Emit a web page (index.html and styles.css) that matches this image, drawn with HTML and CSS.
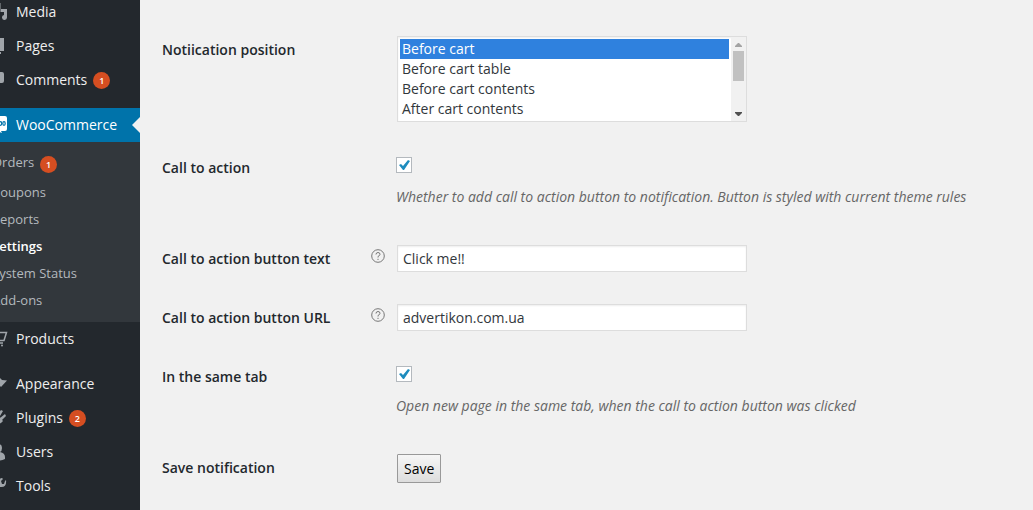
FILE: index.html
```html
<!DOCTYPE html>
<html lang="en">
<head>
<meta charset="utf-8">
<title>WooCommerce settings</title>
<link rel="stylesheet" href="styles.css">
</head>
<body>
<div class="admin">
  <nav class="sidebar" aria-label="Admin menu">
    <ul class="menu">
      <li><a class="menu-link" href="#"><svg class="icon" viewBox="0 0 20 20"><path d="M2 1h10.500v9H2zM13 7h6v8.500a2.500 2.500 0 1 1-3-2.500V10h-3z"/></svg>Media</a></li>
      <li><a class="menu-link" href="#"><svg class="icon" viewBox="0 0 20 20"><path d="M6 15V2h10v13zM5 16h8v2H3V5h2z"/></svg>Pages</a></li>
      <li><a class="menu-link" href="#"><svg class="icon" viewBox="0 0 20 20"><path d="M5 2h9q2 0 2 2v7q0 2-2 2h-2l-5 5v-5H5q-2 0-2-2V4q0-2 2-2z"/></svg>Comments <span class="count">1</span></a></li>
      <li class="separator"></li>
      <li>
        <a class="menu-link current" href="#"><svg class="icon" viewBox="0 0 20 20"><path d="M2 1h15q2 0 2 2v11q0 2-2 2h-4l1 2-5-2H2z"/><g class="icon-mark"><ellipse cx="12.500" cy="8.500" rx="1.200" ry="1.800"/><ellipse cx="16" cy="8.500" rx="1.200" ry="1.800"/><path d="M3 6l1 5 2-3 1 3 2-5"/></g></svg>WooCommerce</a>
        <ul class="submenu">
          <li><a class="submenu-link with-count" href="#">Orders <span class="count">1</span></a></li>
          <li><a class="submenu-link" href="#">Coupons</a></li>
          <li><a class="submenu-link" href="#">Reports</a></li>
          <li><a class="submenu-link selected" href="#">Settings</a></li>
          <li><a class="submenu-link" href="#">System Status</a></li>
          <li><a class="submenu-link" href="#">Add-ons</a></li>
        </ul>
      </li>
      <li><a class="menu-link" href="#"><svg class="icon" viewBox="0 0 20 20"><path class="icon-line" d="M5 3.500h13.500L16 11.500H7M9 14h6"/><circle cx="10" cy="16.500" r="1"/><circle cx="14" cy="16.500" r="1"/></svg>Products</a></li>
      <li class="separator"></li>
      <li><a class="menu-link" href="#"><svg class="icon" viewBox="0 0 20 20"><path d="M10 2l4 4 5 0.500-6 6.500-5-5zM8 9l4 4-5 4H2l3-3z"/></svg>Appearance</a></li>
      <li><a class="menu-link" href="#"><svg class="icon" viewBox="0 0 20 20"><path d="M13 2l2 1-3 5-2-2zM17 6l1 2-4 4-2-2zM8 5l7 8q-3 4-7 2l-4 4-2-2 4-4q-2-4 2-8z"/></svg>Plugins <span class="count">2</span></a></li>
      <li><a class="menu-link" href="#"><svg class="icon" viewBox="0 0 20 20"><path d="M10 2q4 0 4 4 0 3-2 4 5 1 5 5v2q-7 3-14 0v-2q0-4 5-5-2-1-2-4 0-4 4-4z"/></svg>Users</a></li>
      <li><a class="menu-link" href="#"><svg class="icon" viewBox="0 0 20 20"><path d="M17 5l1-1q1 8-6 7l-6 7q-2 1-3-1t0-3l7-6q-1-5 4-6l1 1-2 2 1 3 2 0z"/></svg>Tools</a></li>
    </ul>
  </nav>
  <main class="content">
    <form class="settings">
      <div class="row">
        <label class="label" for="position">Notiication position</label>
        <div class="field">
          <div class="list-box">
            <select class="list" id="position" size="4">
              <option selected>Before cart</option>
              <option>Before cart table</option>
              <option>Before cart contents</option>
              <option>After cart contents</option>
              <option>After cart table</option>
              <option>Before cart totals</option>
              <option>After cart totals</option>
              <option>After cart</option>
            </select>
            <div class="scrollbar" aria-hidden="true">
              <svg class="arrow arrow-up" viewBox="0 0 7 4"><path d="M0 4V3L3 0H4L7 3V4z"/></svg>
              <div class="thumb"></div>
              <svg class="arrow" viewBox="0 0 7 4"><path d="M0 0V1L3 4H4L7 1V0z"/></svg>
            </div>
          </div>
        </div>
      </div>
      <div class="row">
        <label class="label" for="cta">Call to action</label>
        <div class="field">
          <input class="check" type="checkbox" id="cta" checked>
          <p class="description">Whether to add call to action button to notification. Button is styled with current theme rules</p>
        </div>
      </div>
      <div class="row">
        <label class="label" for="cta-text">Call to action button text</label>
        <svg class="help" viewBox="0 0 14 14"><circle cx="7" cy="7" r="6.300"/><path d="M5 5.500q0-2 2-2t2 1.800Q9 6.500 7 7.500V8.500M7 9.800V11"/></svg>
        <div class="field"><input class="text" type="text" id="cta-text" value="Click me!!"></div>
      </div>
      <div class="row">
        <label class="label" for="cta-url">Call to action button URL</label>
        <svg class="help" viewBox="0 0 14 14"><circle cx="7" cy="7" r="6.300"/><path d="M5 5.500q0-2 2-2t2 1.800Q9 6.500 7 7.500V8.500M7 9.800V11"/></svg>
        <div class="field"><input class="text" type="text" id="cta-url" value="advertikon.com.ua"></div>
      </div>
      <div class="row">
        <label class="label" for="same-tab">In the same tab</label>
        <div class="field">
          <input class="check" type="checkbox" id="same-tab" checked>
          <p class="description">Open new page in the same tab, when the call to action button was clicked</p>
        </div>
      </div>
      <div class="row">
        <label class="label" for="save">Save notification</label>
        <div class="field"><button class="save" type="button" id="save">Save</button></div>
      </div>
    </form>
  </main>
</div>
</body>
</html>
```
FILE: styles.css
```css
* { box-sizing: border-box; }

body {
  margin: 0;
  overflow: hidden;
  background: #f1f1f1;
  color: #23282d;
  font: 14px/20px "Open Sans", "Noto Sans", sans-serif;
}

.admin { display: flex; height: 100vh; }

/* Sidebar */
.sidebar {
  flex: none;
  width: 160px;
  margin-left: -20px;
  background: #23282d;
}

.menu, .submenu { margin: 0; padding: 0; list-style: none; }
.menu { margin-top: -5px; }

.menu-link {
  display: flex;
  align-items: center;
  height: 34px;
  padding-left: 8px;
  color: #eee;
  text-decoration: none;
}

.icon {
  flex: none;
  width: 20px;
  height: 20px;
  margin-right: 8px;
  fill: #a0a5aa;
}
.icon-line { fill: none; stroke: #a0a5aa; stroke-width: 1.5; }
.icon-mark { fill: none; stroke: #0073aa; stroke-width: 1.2; }

.separator { height: 11px; }

.current { position: relative; background: #0073aa; color: #fff; }
.current .icon { fill: #fff; }
.current::after {
  content: "";
  position: absolute;
  top: 9px;
  right: 0;
  border: 8px solid transparent;
  border-left: 0;
  border-right-color: #f1f1f1;
}

.submenu { padding: 6px 0 9px; background: #32373c; }

.submenu-link {
  display: flex;
  align-items: center;
  height: 27px;
  padding-left: 12px;
  color: #b4b9be;
  font-size: 13px;
  text-decoration: none;
}
.with-count { height: 30px; padding-bottom: 2px; }
.with-count .count { margin-top: 4px; }
.selected { color: #fff; font-weight: 600; }

.count {
  width: 17px;
  height: 17px;
  margin-left: 6px;
  border-radius: 50%;
  background: #d54e21;
  color: #fff;
  font-size: 9px;
  font-weight: 600;
  line-height: 17px;
  text-align: center;
}

/* Settings form */
.content { flex: 1; min-width: 0; padding: 21px 22px 0; }

.row {
  display: grid;
  grid-template-columns: 209px 26px 1fr;
  padding: 15px 0 17px;
}

.label { padding-top: 4px; font-weight: 600; }
.help {
  width: 14px;
  height: 14px;
  margin-top: 4px;
  fill: none;
  stroke: #777;
}
.field { grid-column: 3; }

.list-box, .text {
  display: block;
  width: 350px;
  max-width: 100%;
  margin: 0;
  border: 1px solid #ddd;
  border-radius: 0;
  outline: 0;
  background: #fff;
  box-shadow: inset 0 1px 2px rgba(0, 0, 0, .07);
  color: #32373c;
  font: inherit;
}
.text { height: 27px; padding: 2px 5px; }

.list-box { display: flex; height: 86px; }
.list {
  flex: 1;
  min-width: 0;
  height: 84px;
  margin: 0;
  padding: 2px;
  border: 0;
  border-radius: 0;
  outline: 0;
  background: transparent;
  color: inherit;
  font: inherit;
  scrollbar-width: none;
}
.list option { min-height: 20px; padding: 0 2px; line-height: 20px; }
.list option:checked { background: #2f81de linear-gradient(#2f81de, #2f81de); color: #fff; }

.scrollbar {
  display: flex;
  flex: none;
  flex-direction: column;
  align-items: center;
  width: 15px;
  padding: 6px 0 5px;
  background: #f1f1f1;
}
.thumb { width: 11px; height: 30px; margin: 4px 0 auto; background: #c1c1c1; }
.arrow { width: 7px; height: 4px; fill: #505050; }
.arrow-up { fill: #a3a3a3; }

.check {
  display: block;
  width: 16px;
  height: 16px;
  margin: 3px 0 0 -1px;
  border: 1px solid #b4b9be;
  appearance: none;
  background: #fff;
}
.check:checked {
  background-image: url('data:image/svg+xml,<svg xmlns="http://www.w3.org/2000/svg" width="14" height="14"><path d="M2 7l2-1 2 2 5-6 2 1-6 9H6z" fill="%231e8cbe"/></svg>');
}

.description {
  margin: 14px 0 6px -1px;
  color: #666;
  font-style: italic;
}

.save {
  height: 29px;
  padding: 0 6px;
  border: 1px solid #999;
  border-radius: 1px;
  background: linear-gradient(#f6f6f6, #ddd);
  color: #000;
  font: inherit;
}
```
